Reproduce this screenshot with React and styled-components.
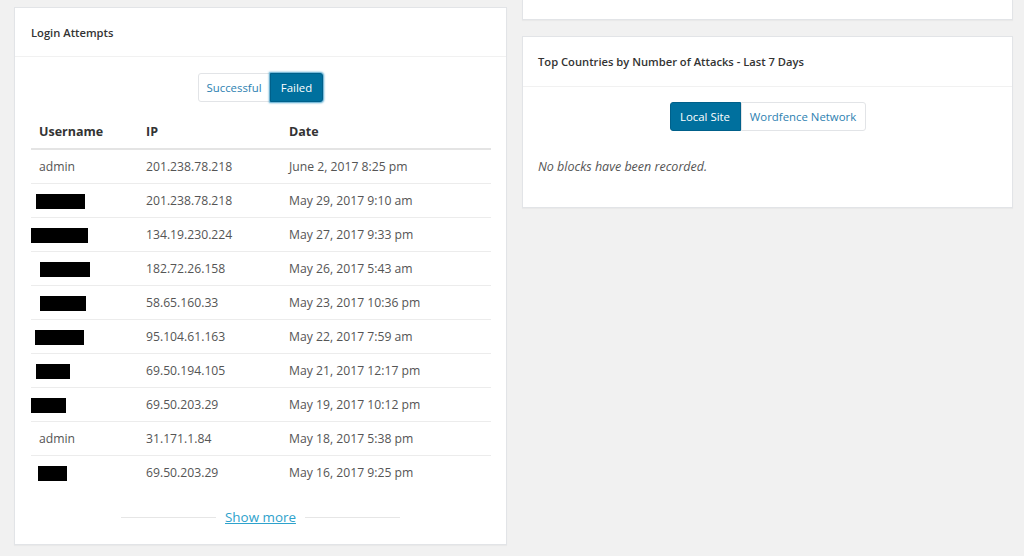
import React from "react";
import styled, { createGlobalStyle } from "styled-components";

const GlobalStyle = createGlobalStyle`
  html, body {
    margin: 0;
    padding: 0;
    background: #f1f1f1;
    font-family: "Open Sans", "Noto Sans", sans-serif;
    color: #555;
  }
`;

const attempts = [
  { user: "admin", ip: "201.238.78.218", date: "June 2, 2017 8:25 pm" },
  { mask: [5, 49], ip: "201.238.78.218", date: "May 29, 2017 9:10 am" },
  { mask: [0, 57], ip: "134.19.230.224", date: "May 27, 2017 9:33 pm" },
  { mask: [9, 50], ip: "182.72.26.158", date: "May 26, 2017 5:43 am" },
  { mask: [9, 46], ip: "58.65.160.33", date: "May 23, 2017 10:36 pm" },
  { mask: [4, 49], ip: "95.104.61.163", date: "May 22, 2017 7:59 am" },
  { mask: [5, 34], ip: "69.50.194.105", date: "May 21, 2017 12:17 pm" },
  { mask: [0, 35], ip: "69.50.203.29", date: "May 19, 2017 10:12 pm" },
  { user: "admin", ip: "31.171.1.84", date: "May 18, 2017 5:38 pm" },
  { mask: [7, 29], ip: "69.50.203.29", date: "May 16, 2017 9:25 pm" },
];

const Page = styled.div`
  display: grid;
  grid-template-columns: 493px 491px;
  column-gap: 15px;
  padding: 0 0 0 14px;
  width: 1024px;
  height: 556px;
  box-sizing: border-box;
  overflow: hidden;
`;

const Column = styled.div`
  display: flex;
  flex-direction: column;
  gap: 16px;
  padding-top: ${(p) => p.$top || 0}px;
`;

const Card = styled.section`
  background: #fff;
  border: 1px solid #e2e4e7;
  box-shadow: 0 1px 1px rgba(0, 0, 0, 0.03);
  box-sizing: border-box;
`;

const Stub = styled(Card)`
  height: 20px;
  border-top: none;
`;

const CardHeader = styled.header`
  height: ${(p) => p.$h}px;
  display: flex;
  align-items: center;
  padding: 0 ${(p) => p.$px || 16}px;
  border-bottom: 1px solid #f1f1f1;
  font-size: ${(p) => p.$fs}px;
  font-weight: 600;
  color: #333;
`;

const CardBody = styled.div`
  padding: ${(p) => p.$pad};
  display: flex;
  flex-direction: column;
`;

const Toggle = styled.div`
  display: flex;
  align-self: center;
`;

const ToggleButton = styled.button`
  font-family: inherit;
  font-size: 11.4px;
  height: 29px;
  width: ${(p) => p.$w}px;
  padding: 0;
  border: 1px solid ${(p) => (p.$active ? "#00608a" : "#e2e4e7")};
  background: ${(p) => (p.$active ? "#00709e" : "#fff")};
  color: ${(p) => (p.$active ? "#fff" : "#2d7fb1")};
  border-radius: ${(p) => p.$radius};
  box-shadow: ${(p) => (p.$focus ? "0 0 2px 1px rgba(30,140,190,0.8)" : "none")};
  cursor: pointer;
`;

const Table = styled.table`
  width: 460px;
  margin: 12px 0 0 0;
  border-collapse: collapse;
  font-size: 12.2px;
`;

const Th = styled.th`
  text-align: left;
  font-weight: 700;
  font-size: 12.5px;
  color: #333;
  height: 33px;
  padding: 0 8px;
  border-bottom: 2px solid #e4e4e4;
`;

const Row = styled.tr`
  & + & td {
    border-top: 1px solid #ececec;
  }
`;

const Td = styled.td`
  height: 33px;
  padding: 0 8px;
  color: #555;
  width: ${(p) => p.$w || "auto"};
`;

const Mask = styled.span`
  display: inline-block;
  background: #000;
  height: 15px;
  vertical-align: middle;
  margin-left: ${(p) => p.$x - 8}px;
  width: ${(p) => p.$w}px;
`;

const Footer = styled.div`
  display: flex;
  align-items: center;
  justify-content: center;
  gap: 9px;
  padding: 18px 0 17px;
`;

const Rule = styled.span`
  width: 95px;
  height: 1px;
  background: #e6e6e6;
`;

const ShowMore = styled.a`
  color: #2ea2cc;
  font-size: 13.4px;
  text-decoration: underline;
  line-height: 20px;
`;

const Empty = styled.p`
  margin: 27px 0 0;
  font-style: italic;
  font-size: 12.5px;
  color: #555;
`;

export default function App() {
  return (
    <>
      <GlobalStyle />
      <Page>
        <Column $top={7}>
          <Card style={{ height: 538 }}>
            <CardHeader $h={48} $fs={11.2}>Login Attempts</CardHeader>
            <CardBody $pad="16px 16px 0 16px">
              <Toggle>
                <ToggleButton $w={72} $radius="3px 0 0 3px">
                  Successful
                </ToggleButton>
                <ToggleButton $w={53} $active $focus $radius="0 3px 3px 0">
                  Failed
                </ToggleButton>
              </Toggle>
              <Table style={{ marginTop: 13 }}>
                <thead>
                  <tr>
                    <Th>Username</Th>
                    <Th>IP</Th>
                    <Th>Date</Th>
                  </tr>
                </thead>
                <tbody>
                  {attempts.map((a, i) => (
                    <Row key={i}>
                      <Td $w="91px">
                        {a.user || <Mask $x={a.mask[0]} $w={a.mask[1]} />}
                      </Td>
                      <Td $w="127px">{a.ip}</Td>
                      <Td>{a.date}</Td>
                    </Row>
                  ))}
                </tbody>
              </Table>
            </CardBody>
            <Footer>
              <Rule />
              <ShowMore href="#">Show more</ShowMore>
              <Rule />
            </Footer>
          </Card>
        </Column>
        <Column>
          <Stub />
          <Card style={{ height: 172 }}>
            <CardHeader $h={49} $fs={11.2} $px={15}>
              Top Countries by Number of Attacks - Last 7 Days
            </CardHeader>
            <CardBody $pad="15px 15px">
              <Toggle>
                <ToggleButton $w={71} $active $radius="3px 0 0 3px">
                  Local Site
                </ToggleButton>
                <ToggleButton $w={125} $radius="0 3px 3px 0">
                  Wordfence Network
                </ToggleButton>
              </Toggle>
              <Empty>No blocks have been recorded.</Empty>
            </CardBody>
          </Card>
        </Column>
      </Page>
    </>
  );
}
